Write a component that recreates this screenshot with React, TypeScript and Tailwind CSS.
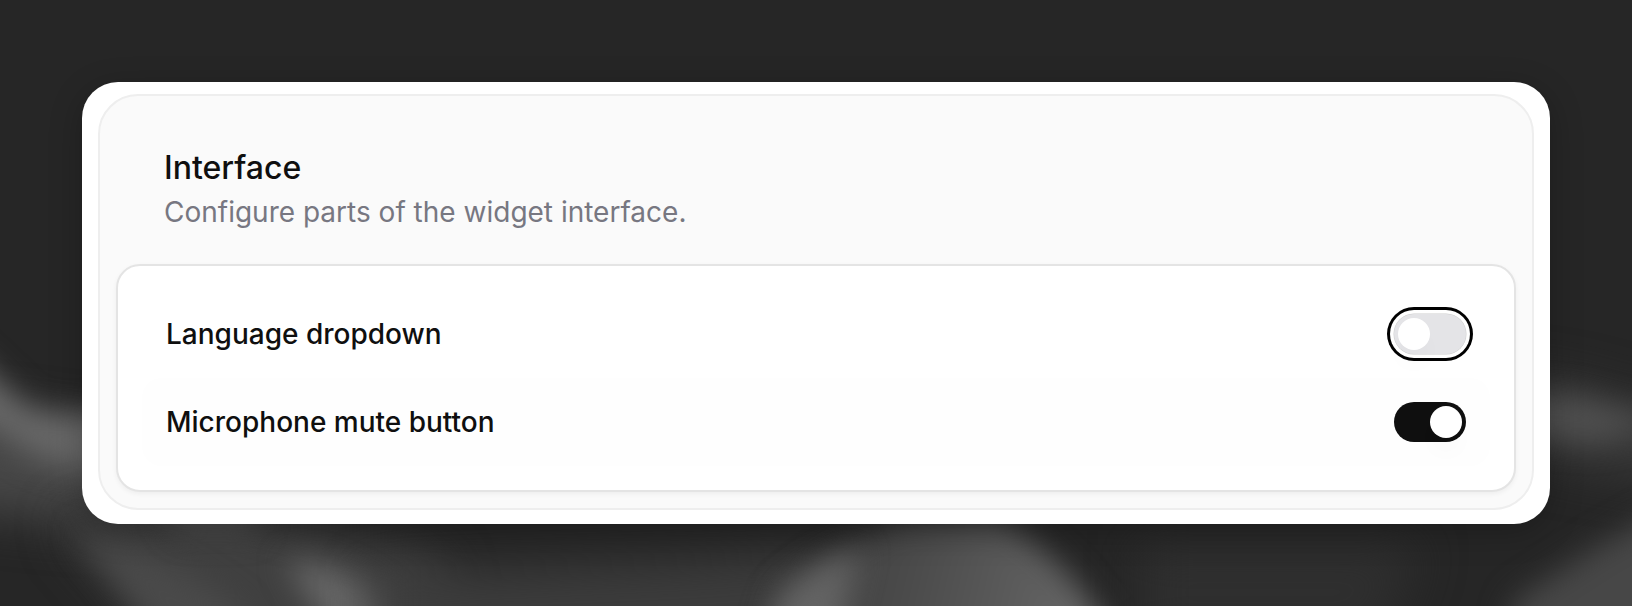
import { useState } from "react";

function Backdrop() {
  return (
    <svg
      className="absolute inset-0 h-full w-full"
      viewBox="0 0 1632 606"
      preserveAspectRatio="none"
      aria-hidden="true"
    >
      <defs>
        <filter id="soft" filterUnits="userSpaceOnUse" x="-200" y="200" width="2100" height="700" colorInterpolationFilters="sRGB">
          <feGaussianBlur stdDeviation="15" />
        </filter>
        <filter id="softer" filterUnits="userSpaceOnUse" x="-200" y="200" width="2100" height="700" colorInterpolationFilters="sRGB">
          <feGaussianBlur stdDeviation="24" />
        </filter>
        <linearGradient id="hill" gradientUnits="userSpaceOnUse" x1="820" y1="560" x2="1080" y2="620">
          <stop offset="0" stopColor="#444444" />
          <stop offset="0.3" stopColor="#494949" />
          <stop offset="1" stopColor="#666666" />
        </linearGradient>
      </defs>
      <rect width="1632" height="606" fill="#262626" />
      <path d="M-120 400 L100 430 L200 480 L200 530 L60 520 L-120 500Z" fill="#474747" filter="url(#softer)" />
      <path d="M-80 310 Q-10 370 20 402 Q50 424 120 408 L180 408 L180 484 Q60 480 0 436 L-80 400Z" fill="#686868" filter="url(#soft)" />
      <path d="M60 520 L230 500 L440 560 L470 720 L230 720Z" fill="#404040" filter="url(#softer)" />
      <path d="M75 530 Q160 550 240 610 L260 720 L170 650Z" fill="#4a4a4a" filter="url(#soft)" />
      <path d="M160 495 L255 500 L255 532 L180 532Z" fill="#4e4e4e" filter="url(#soft)" />
      <path d="M285 560 Q375 565 440 660 L370 690Z" fill="#686868" filter="url(#soft)" />
      <path d="M370 575 L700 560 L830 550 L820 720 L370 720Z" fill="#3c3c3c" filter="url(#softer)" />
      <path d="M755 720 L785 590 Q850 535 910 520 L1000 520 Q1070 560 1115 640 L1115 720Z" fill="url(#hill)" filter="url(#soft)" />
      <path d="M745 700 L780 595 Q815 565 860 548 Q845 590 830 700Z" fill="#646464" filter="url(#soft)" />
      <path d="M1140 545 L1420 545 L1380 640 L1140 640Z" fill="#2f2f2f" filter="url(#softer)" />
      <path d="M1500 375 L1570 385 L1720 425 L1720 490 L1540 460Z" fill="#383838" filter="url(#softer)" />
      <path d="M1500 396 L1570 396 L1670 422 L1600 442 L1500 434Z" fill="#505050" filter="url(#soft)" />
      <path d="M1490 700 L1515 600 L1600 545 L1720 480 L1720 700Z" fill="#474747" filter="url(#soft)" />
    </svg>
  );
}

interface ToggleProps {
  label: string;
  checked: boolean;
  onChange: () => void;
  focused?: boolean;
}

function Toggle({ label, checked, onChange, focused = false }: ToggleProps) {
  return (
    <button
      type="button"
      role="switch"
      aria-label={label}
      aria-checked={checked}
      onClick={onChange}
      className={`flex h-10 w-[72px] items-center rounded-full p-1 outline-none ${
        checked ? "justify-end bg-[#0f0f0f]" : "justify-start bg-[#e4e4e7]"
      } ${focused ? "shadow-[0_0_0_0.5px_rgba(0,0,0,0.2),0_0_0_4px_#fff,0_0_0_7px_#000]" : ""}`}
    >
      <span className="size-8 rounded-full bg-white shadow-[0_16px_24px_-4px_rgba(0,0,0,0.03)]" />
    </button>
  );
}

interface SettingRowProps extends ToggleProps {
  tinted?: boolean;
}

function SettingRow({ tinted = false, ...toggle }: SettingRowProps) {
  return (
    <div
      className={`flex h-[88px] items-center justify-between rounded-[20px] px-6 ${
        tinted ? "bg-[#fefefe]" : ""
      }`}
    >
      <span className="text-[28px] leading-10 font-medium text-[#0f0f0f]">{toggle.label}</span>
      <Toggle {...toggle} />
    </div>
  );
}

export default function App() {
  const [language, setLanguage] = useState(false);
  const [mute, setMute] = useState(true);

  return (
    <main className="relative flex h-[606px] w-[1632px] items-start justify-center overflow-hidden bg-[#262626] pt-[82px] font-['Inter',sans-serif]">
      <Backdrop />
      <div className="relative h-[442px] w-[1468px] rounded-[36px] bg-white px-4 pt-3 shadow-[0_8px_32px_rgba(0,0,0,0.25)]">
        <section className="flex h-[416px] flex-col rounded-[40px] border-2 border-[#eeeeee] bg-[#fafafa] px-4">
          <header className="flex h-[168px] flex-col px-12 pt-[50px]">
            <h2 className="text-[32px] leading-[44px] font-medium text-[#0f0f0f]">Interface</h2>
            <p className="text-[28px] leading-[44px] text-[#777781]">
              Configure parts of the widget interface.
            </p>
          </header>
          <div className="flex h-[228px] flex-col rounded-3xl border-2 border-[#e4e4e4] bg-white p-6 shadow-[0_2px_5px_rgba(0,0,0,0.05)]">
            <SettingRow
              label="Language dropdown"
              checked={language}
              onChange={() => setLanguage(!language)}
              focused
            />
            <SettingRow
              label="Microphone mute button"
              checked={mute}
              onChange={() => setMute(!mute)}
              tinted
            />
          </div>
        </section>
      </div>
    </main>
  );
}
